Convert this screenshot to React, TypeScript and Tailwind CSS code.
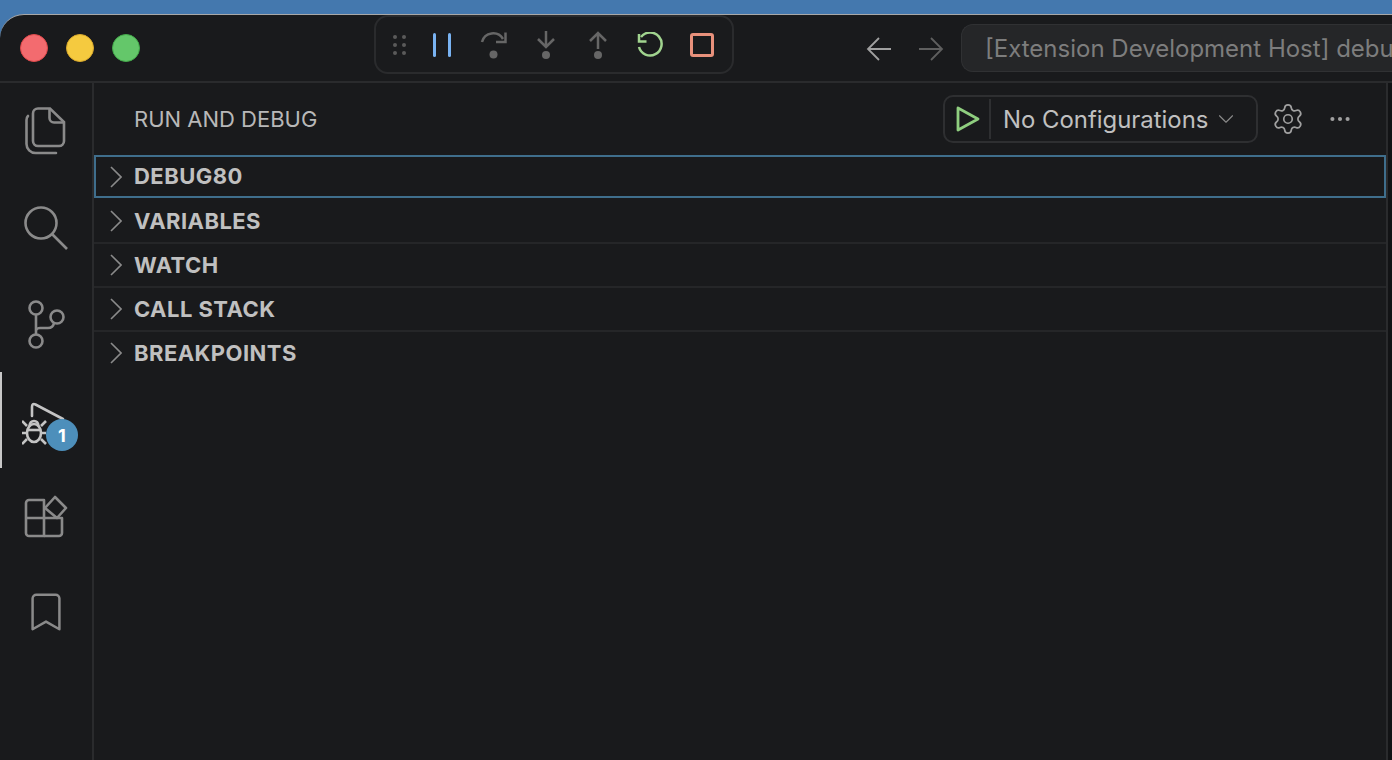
import React from 'react';
import { ChevronDown, Settings, Ellipsis, Bookmark } from 'lucide-react';

const sections = ['VARIABLES', 'WATCH', 'CALL STACK', 'BREAKPOINTS'];

const FilesIcon = () => (
  <svg width="42" height="50" viewBox="0 0 42 50" fill="none" stroke="#8a8a8a" strokeWidth="2.6">
    <path d="M8 6.500 A5 5 0 0 1 13 1.500 H25 L39 15 V34 A5 5 0 0 1 34 39 H13 A5 5 0 0 1 8 34 Z" />
    <path d="M24.500 2 V11 A4.500 4.500 0 0 0 29 15.500 H39" />
    <path d="M3 9 Q1.500 10.500 1.500 13 V37 A9 9 0 0 0 10.500 46 H31" strokeLinecap="round" />
  </svg>
);

const SearchIcon = () => (
  <svg width="44" height="44" viewBox="0 0 44 44" fill="none" stroke="#8a8a8a" strokeWidth="2.6">
    <circle cx="17" cy="17" r="15.500" />
    <path d="M28 28 L43 43" />
  </svg>
);

const BranchIcon = () => (
  <svg width="38" height="50" viewBox="0 0 38 50" fill="none" stroke="#8a8a8a" strokeWidth="2.6">
    <circle cx="9" cy="8" r="6.500" />
    <circle cx="30" cy="17" r="6.500" />
    <circle cx="9" cy="41" r="6.500" />
    <path d="M9 14.500 V34.500" />
    <path d="M9 30 Q10 28 13 28 H21 Q26 28 27 23" />
  </svg>
);

const DebugIcon = () => (
  <svg width="44" height="44" viewBox="0 0 44 44" fill="none" stroke="#c4c4c4" strokeWidth="2.600">
    <path d="M10 14 V5 Q10 1 13.500 2.500 L41 17" strokeLinecap="round" />
    <ellipse cx="12" cy="31" rx="7" ry="9" />
    <path d="M5 28 H19" />
    <path d="M7.500 24 Q8 19 12 19 Q16 19 16.500 24" />
    <path d="M0 19 L5 24 M24 19 L19 24 M0 31 H5 M19 31 H24 M0 42 L5 37 M24 42 L19 37" />
  </svg>
);

const ExtensionsIcon = () => (
  <svg width="44" height="44" viewBox="0 0 44 44" fill="none" stroke="#8a8a8a" strokeWidth="2.600" strokeLinejoin="round">
    <path d="M5 5 H20 V41 H5 A3 3 0 0 1 2 38 V8 A3 3 0 0 1 5 5 Z" />
    <path d="M2 23 H38 V38 A3 3 0 0 1 35 41 H20" />
    <path d="M31 2 L42 13 L33 23 L21 13 Z" />
  </svg>
);

const StepOverIcon = () => (
  <svg width="28" height="28" viewBox="0 0 28 28" fill="none" stroke="#666" strokeWidth="2.500">
    <path d="M2 11 A11.500 11.500 0 0 1 23 8" />
    <path d="M25.500 1.500 V11 H16" />
    <circle cx="13.500" cy="23.500" r="4" fill="#666" stroke="none" />
  </svg>
);

const StepIcon = ({ up }: { up?: boolean }) => (
  <svg width="20" height="28" viewBox="0 0 20 28" fill="none" stroke="#666" strokeWidth="2.500">
    {up ? <path d="M10 18 V2 M2 10 L10 2 L18 10" /> : <path d="M10 0 V16 M2 8 L10 16 L18 8" />}
    <circle cx="10" cy="24" r="4" fill="#666" stroke="none" />
  </svg>
);

const RestartIcon = () => (
  <svg width="26" height="26" viewBox="0 0 26 26" fill="none" stroke="#a1d48f" strokeWidth="2.500">
    <path d="M4 5 A11.500 11.500 0 1 1 2 15" />
    <path d="M2 2 V9.500 H9.500" />
  </svg>
);

const NavArrow = ({ right }: { right?: boolean }) => (
  <svg width="26" height="26" viewBox="0 0 26 26" fill="none" stroke={right ? '#5f5f5f' : '#a0a0a0'} strokeWidth="1.800">
    {right ? <path d="M1 13 H24 M13 2 L24 13 L13 24" /> : <path d="M25 13 H2 M13 2 L2 13 L13 24" />}
  </svg>
);

const DebugToolbar = () => (
  <div className="absolute left-[374px] top-0 flex h-[59px] w-[360px] items-center rounded-[14px] border-2 border-[#2a2b2d] bg-[#1a1b1d]">
    <div className="ml-[17px] grid w-[14px] grid-cols-2 gap-x-[4px] gap-y-[4px]">
      {[0, 1, 2, 3, 4, 5].map(i => <span key={i} className="h-1 w-1 rounded-full bg-[#5a5a5a]" />)}
    </div>
    <div className="ml-[26px] flex h-[24px] w-[18px] justify-between">
      <span className="h-full w-[3px] rounded-sm bg-[#79b3f2]" />
      <span className="h-full w-[3px] rounded-sm bg-[#79b3f2]" />
    </div>
    <div className="ml-[29px]"><StepOverIcon /></div>
    <div className="ml-[28px]"><StepIcon /></div>
    <div className="ml-[32px]"><StepIcon up /></div>
    <div className="ml-[29px]"><RestartIcon /></div>
    <div className="ml-[27px] h-[24px] w-[24px] rounded-[3px] border-[3px] border-[#e8917c]" />
  </div>
);

const TitleBar = () => (
  <div className="relative flex h-[68px] shrink-0 items-center border-b-2 border-[#2a2b2d]">
    <div className="ml-[20px] flex gap-[18px]">
      <span className="h-[28px] w-[28px] rounded-full border border-[#e0484a] bg-[#f36b6f]" />
      <span className="h-[28px] w-[28px] rounded-full border border-[#d9a92c] bg-[#f5ca3f]" />
      <span className="h-[28px] w-[28px] rounded-full border border-[#43a94a] bg-[#64c76a]" />
    </div>
    <DebugToolbar />
    <div className="ml-auto flex h-full items-start">
      <div className="mt-[21px] mr-[26px]"><NavArrow /></div>
      <div className="mt-[21px] mr-[17px]"><NavArrow right /></div>
      <div className="mt-[9px] flex h-[48px] w-[431px] items-center overflow-hidden rounded-l-[12px] border border-r-0 border-[#303133] bg-[#252628] pl-[23px] pt-[2px] text-[24px] whitespace-nowrap text-[#7d7d7d]">
        [Extension Development Host] debug80
      </div>
    </div>
  </div>
);

const ActivityBar = () => (
  <aside className="flex w-[94px] shrink-0 flex-col items-center border-r-2 border-[#2a2b2d] pt-[24px]">
    <div className="flex h-[49px] items-center"><FilesIcon /></div>
    <div className="mt-[48px] -ml-[1px] flex h-[48px] items-center"><SearchIcon /></div>
    <div className="mt-[48px] flex h-[50px] items-center"><BranchIcon /></div>
    <div className="relative mt-[22px] h-[96px] w-full border-l-2 border-[#c8c8c8] pl-[20px] pt-[30px]">
      <DebugIcon />
      <span className="absolute left-[44px] top-[47px] flex h-[32px] w-[32px] items-center justify-center rounded-full bg-[#4d8fbb] text-[18px] font-bold text-white">1</span>
    </div>
    <div className="mt-[27px]"><ExtensionsIcon /></div>
    <div className="mt-[50px]">
      <Bookmark size={46} strokeWidth={1.300} className="text-[#8a8a8a]" />
    </div>
  </aside>
);

const Chevron = () => (
  <svg width="12" height="22" viewBox="0 0 12 22" fill="none" stroke="#8a8a8a" strokeWidth="1.600" className="shrink-0">
    <path d="M1 1 L11 11 L1 21" />
  </svg>
);

const SectionRow = ({ label, focused }: { label: string; focused?: boolean }) => (
  <div
    className={
      focused
        ? 'flex h-[43px] items-center border-2 border-[#3f6e8c] pl-[14px]'
        : 'flex h-[44px] items-center border-b-2 border-[#252628] pl-[16px] last:border-transparent'
    }
  >
    <Chevron />
    <span className="ml-[12px] text-[22px] font-bold tracking-[0.45px] text-[#c0c0c0]">{label}</span>
  </div>
);

const SidePanel = () => (
  <main className="flex min-w-0 flex-1 flex-col">
    <div className="flex h-[72px] shrink-0 items-center pl-[40px]">
      <span className="text-[22px] text-[#b8b8b8]">RUN AND DEBUG</span>
      <div className="ml-auto flex h-[48px] w-[315px] items-center rounded-[10px] border-2 border-[#2e2f31]">
        <svg width="26" height="28" viewBox="0 0 26 28" fill="none" stroke="#8fce7f" strokeWidth="2.800" strokeLinejoin="round" className="ml-[10px]">
          <path d="M3 3 L23 14 L3 25 Z" />
        </svg>
        <span className="ml-[8px] h-[40px] w-[2px] bg-[#2e2f31]" />
        <span className="ml-[12px] pt-[2px] text-[23.900px] whitespace-nowrap text-[#c0c0c0]">No Configurations</span>
        <ChevronDown size={26} strokeWidth={1} className="ml-[5px] text-[#8a8a8a]" />
      </div>
      <Settings size={34} strokeWidth={1.200} className="ml-[13px] text-[#a0a0a0]" />
      <Ellipsis size={26} strokeWidth={1.800} className="ml-[22px] mr-[33px] text-[#a0a0a0]" />
    </div>
    <SectionRow label="DEBUG80" focused />
    <div className="pt-[2px]">
      {sections.map(s => <SectionRow key={s} label={s} />)}
    </div>
  </main>
);

export default function App() {
  return (
    <div className="h-[760px] w-[1392px] overflow-hidden bg-[#4478ae] pt-[14px] font-['Inter',sans-serif]">
      <div className="flex h-[746px] flex-col rounded-tl-[24px] border-t border-[#a8a8a8] bg-[#191a1c]">
        <TitleBar />
        <div className="flex min-h-0 flex-1">
          <ActivityBar />
          <div className="flex min-w-0 flex-1 border-r-2 border-[#2a2b2d]">
            <SidePanel />
          </div>
          <div className="w-[4px] shrink-0 bg-[#121315]" />
        </div>
      </div>
    </div>
  );
}
